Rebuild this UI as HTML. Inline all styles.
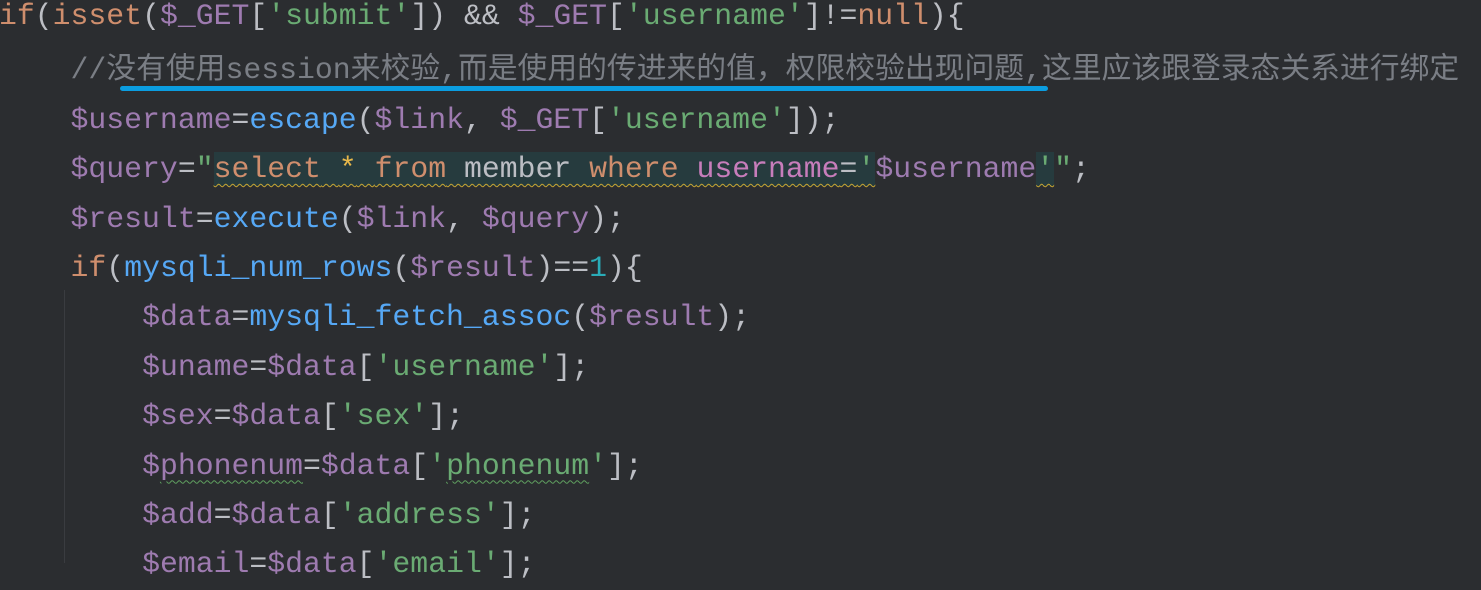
<!DOCTYPE html>
<html><head><meta charset="utf-8"><style>
html,body{margin:0;padding:0;background:#2b2d30;width:1481px;height:563px;overflow:hidden}
.c{position:absolute;left:-1px;top:-8px;font-family:"Liberation Mono","Noto Sans CJK SC",monospace;font-size:29.8px;line-height:49.4px;color:#bcbec4;white-space:pre}
.k{color:#cf8e6d}.v{color:#9e7bb0}.s{color:#6aab73}.f{color:#56a8f5}.n{color:#2aacb8}.cm{color:#7a7e85}.p{color:#c77dbb}
.inj{background:#263b3e}
.w{text-decoration:underline wavy #c9a632;text-decoration-thickness:1px;text-underline-offset:6px}
.wg{text-decoration:underline wavy #5fa05f;text-decoration-thickness:1px;text-underline-offset:6px}
.cj{font-family:"Noto Sans CJK SC",sans-serif;font-size:29.8px}
#ul{position:absolute;left:120px;top:86px;width:928px;height:5px;border-radius:3px;background:#0b9de0}
#g{position:absolute;left:64px;top:290px;width:1px;height:273px;background:#3a3c40}
</style></head><body>
<div id="g"></div>
<div class="c"><span class="k">if</span>(<span class="k">isset</span>(<span class="v">$_GET</span>[<span class="s">'submit'</span>]) &amp;&amp; <span class="v">$_GET</span>[<span class="s">'username'</span>]!=<span class="k">null</span>){
    <span class="cm">//<span class="cj">没有使用</span>session<span class="cj">来校验</span>,<span class="cj">而是使用的传进来的值，权限校验出现问题</span>,<span class="cj">这里应该跟登录态关系进行绑定</span></span>
    <span class="v">$username</span>=<span class="f">escape</span>(<span class="v">$link</span>, <span class="v">$_GET</span>[<span class="s">'username'</span>]);
    <span class="v">$query</span>=<span class="s">"</span><span class="inj w"><span class="k">select</span> <span style="color:#e8b84a">*</span> <span class="k">from</span> member <span class="k">where</span> <span class="p">username</span>=<span class="s">'</span></span><span class="v">$username</span><span class="inj w"><span class="s">'</span></span><span class="s">"</span>;
    <span class="v">$result</span>=<span class="f">execute</span>(<span class="v">$link</span>, <span class="v">$query</span>);
    <span class="k">if</span>(<span class="f">mysqli_num_rows</span>(<span class="v">$result</span>)==<span class="n">1</span>){
        <span class="v">$data</span>=<span class="f">mysqli_fetch_assoc</span>(<span class="v">$result</span>);
        <span class="v">$uname</span>=<span class="v">$data</span>[<span class="s">'username'</span>];
        <span class="v">$sex</span>=<span class="v">$data</span>[<span class="s">'sex'</span>];
        <span class="v">$<span class="wg">phonenum</span></span>=<span class="v">$data</span>[<span class="s">'<span class="wg">phonenum</span>'</span>];
        <span class="v">$add</span>=<span class="v">$data</span>[<span class="s">'address'</span>];
        <span class="v">$email</span>=<span class="v">$data</span>[<span class="s">'email'</span>];
</div>
<div id="ul"></div>
</body></html>
